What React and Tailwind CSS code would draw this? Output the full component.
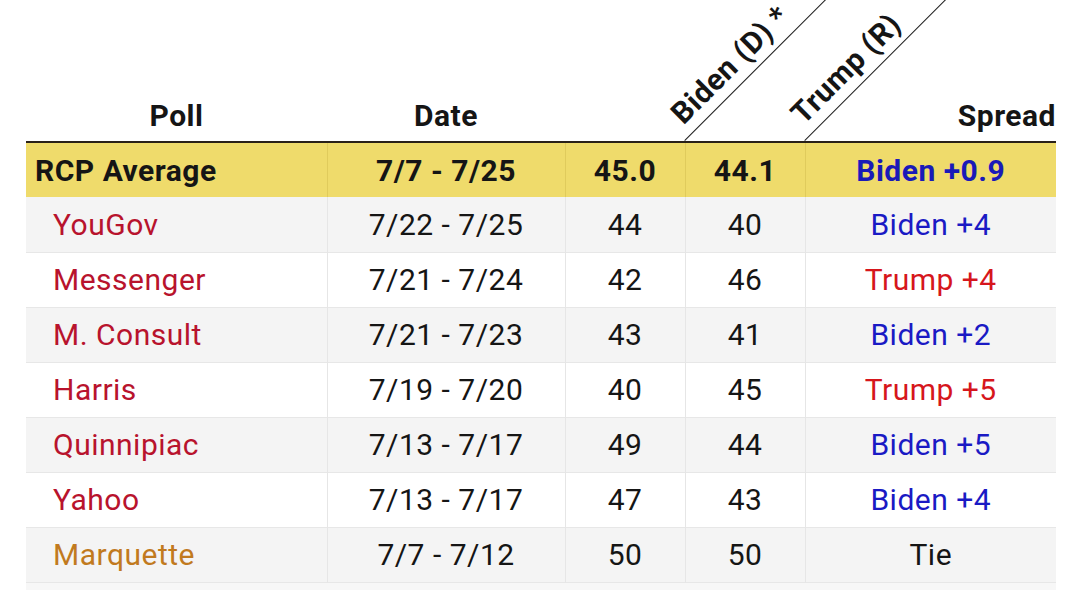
const rows = [
  { poll: "YouGov", date: "7/22 - 7/25", biden: "44", trump: "40", spread: "Biden +4", party: "D", pollColor: "text-[#b8132d]", bg: "bg-[#f4f4f4]" },
  { poll: "Messenger", date: "7/21 - 7/24", biden: "42", trump: "46", spread: "Trump +4", party: "R", pollColor: "text-[#b8132d]", bg: "bg-white" },
  { poll: "M. Consult", date: "7/21 - 7/23", biden: "43", trump: "41", spread: "Biden +2", party: "D", pollColor: "text-[#b8132d]", bg: "bg-[#f4f4f4]" },
  { poll: "Harris", date: "7/19 - 7/20", biden: "40", trump: "45", spread: "Trump +5", party: "R", pollColor: "text-[#b8132d]", bg: "bg-white" },
  { poll: "Quinnipiac", date: "7/13 - 7/17", biden: "49", trump: "44", spread: "Biden +5", party: "D", pollColor: "text-[#b8132d]", bg: "bg-[#f4f4f4]" },
  { poll: "Yahoo", date: "7/13 - 7/17", biden: "47", trump: "43", spread: "Biden +4", party: "D", pollColor: "text-[#b8132d]", bg: "bg-white" },
  { poll: "Marquette", date: "7/7 - 7/12", biden: "50", trump: "50", spread: "Tie", party: "", pollColor: "text-[#c17a1e]", bg: "bg-[#f4f4f4]" },
];

const spreadColor = (party) => {
  if (party === "D") return "text-[#1a1ac4]";
  if (party === "R") return "text-[#d6161c]";
  return "text-[#151515]";
};

// slanted column header: line starts at the cell's right edge
const SlantHeader = ({ label }) => (
  <div className="absolute left-[120px] bottom-0 w-[240px] origin-bottom-left -rotate-45 border-b-[1.5px] border-[#1e1e1e] pl-[10px] pb-[6px] text-left text-[30px] leading-none font-bold tracking-[0.5px] whitespace-nowrap">
    {label}
  </div>
);

export default function App() {
  return (
    <div className="h-[590px] overflow-hidden bg-white pl-[26px] font-['Roboto',sans-serif] text-[#151515] tracking-[0.5px]">
      <table className="w-[1030px] table-fixed border-collapse">
        <colgroup>
          <col className="w-[301px]" />
          <col className="w-[238px]" />
          <col className="w-[120px]" />
          <col className="w-[120px]" />
          <col className="w-[251px]" />
        </colgroup>
        <thead>
          <tr className="h-[142px] border-b-2 border-[#2a2118] text-[30px] leading-[34px] font-bold">
            <th className="align-bottom pb-[8px] text-center">Poll</th>
            <th className="align-bottom pb-[8px] text-center">Date</th>
            <th className="relative align-bottom p-0">
              <SlantHeader label="Biden (D) *" />
            </th>
            <th className="relative align-bottom p-0">
              <SlantHeader label="Trump (R)" />
            </th>
            <th className="align-bottom pb-[8px] text-right pr-0">Spread</th>
          </tr>
        </thead>
        <tbody className="text-[30px]">
          <tr className="h-[55px] bg-[#efdb6b] font-bold">
            <td className="border-r border-[#e0cb5c] pl-[9px] text-left">RCP Average</td>
            <td className="border-r border-[#e0cb5c] text-center">7/7 - 7/25</td>
            <td className="border-r border-[#e0cb5c] text-center">45.0</td>
            <td className="border-r border-[#e0cb5c] text-center">44.1</td>
            <td className="text-center text-[#1a1ab8]">Biden +0.9</td>
          </tr>
          {rows.map((r) => (
            <tr key={r.poll} className={`h-[55px] border-b border-[#e7e7e7] ${r.bg}`}>
              <td className={`border-r border-[#e6e6e6] pl-[27px] text-left ${r.pollColor}`}>{r.poll}</td>
              <td className="border-r border-[#e6e6e6] text-center">{r.date}</td>
              <td className="border-r border-[#e6e6e6] text-center">{r.biden}</td>
              <td className="border-r border-[#e6e6e6] text-center">{r.trump}</td>
              <td className={`text-center ${spreadColor(r.party)}`}>{r.spread}</td>
            </tr>
          ))}
          <tr className="h-[55px] bg-[#f7f7f7]">
            <td colSpan={5}></td>
          </tr>
        </tbody>
      </table>
    </div>
  );
}
